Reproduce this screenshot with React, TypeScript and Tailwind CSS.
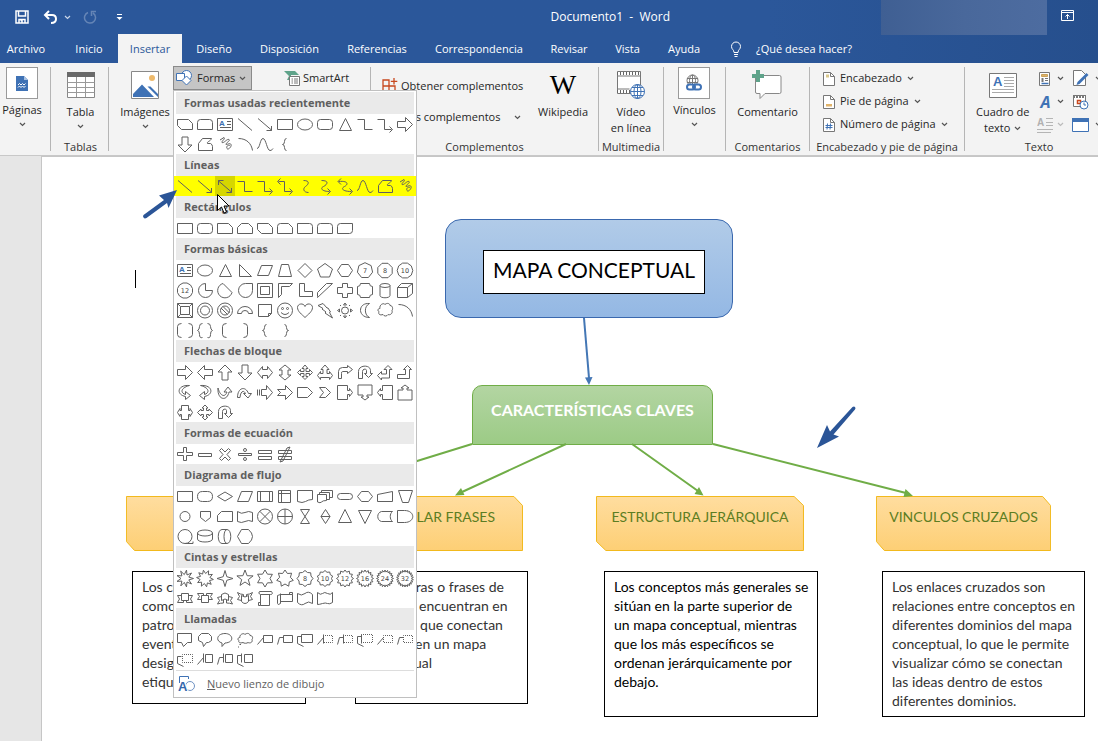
import type { ReactNode } from 'react';

interface ShapeDef {
  d: string;
  label?: string;
  dotted?: string;
  turn?: number;
  flip?: boolean;
  textBox?: boolean;
}

type Shape = string | ShapeDef;

const rect = (x: number, y: number, w: number, h: number) =>
  `M${x} ${y}h${w}v${h}h${-w}z`;

const oval = (cx: number, cy: number, rx: number, ry: number) =>
  `M${cx - rx} ${cy}a${rx} ${ry} 0 1 0 ${rx * 2} 0a${rx} ${ry} 0 1 0 ${-rx * 2} 0z`;

const star = (points: number, outer: number, inner: number, start = -90) =>
  `M${Array.from({ length: points * 2 }, (_, i) => {
    const r = i % 2 ? inner : outer;
    const a = ((start + (i * 180) / points) * Math.PI) / 180;
    return `${(10 + r * Math.cos(a)).toFixed(1)} ${(10.5 + r * Math.sin(a)).toFixed(1)}`;
  }).join('L')}z`;

const polygon = (sides: number, start: number) =>
  `M${Array.from({ length: sides }, (_, i) => {
    const a = ((start + (i * 360) / sides) * Math.PI) / 180;
    return `${(10 + 7.8 * Math.cos(a)).toFixed(1)} ${(10.5 + 7.8 * Math.sin(a)).toFixed(1)}`;
  }).join('L')}z`;

const RECT = rect(2.5, 5.5, 15, 10);
const ROUND = 'M5.5 5.5h9q3 0 3 3v4q0 3-3 3h-9q-3 0-3-3v-4q0-3 3-3z';
const ROUND_TOP = 'M2.5 15.5v-7q0-3 3-3h9q3 0 3 3v7z';
const SNIP_DIAGONAL = 'M2.5 5.5h11l4 4v6h-11l-4-4z';
const TRIANGLE = 'M10.5 4.5l6 12h-12z';
const LINE = 'M3 4.5l14 12';
const LINE_ARROW = 'M3 4.5l14 12M16.5 12v4.5h-5';
const ELBOW = 'M2.5 5.5h7v10h8';
const ELBOW_ARROW = 'M2.5 5.5h7v10h7M14.5 12.5l3 3-3 3';
const FREEFORM = 'M3.5 16.5v-7l4-5h9c-1 3-5 3-4 5h3q2 1 2 3v4z';
const SCRIBBLE =
  'M5 6l4-2.5c2 1-3 4-2 5 2 1 5-4 7-3s-4 4-3 5c2 0 4-2 5 0s-3 6-4 4 1-4 3-3';
const ARC = 'M3.5 4.5c8 0 13 5 14 12';
const CURVE = 'M2 14.5c3 0 3-10 6-10s4 12 7 12c2 0 2-1 3-2';
const BRACE_L = 'M11.5 4.5q-2 0-2 3t-2 3q2 0 2 3t2 3';
const BRACE_R = 'M9.5 4.5q2 0 2 3t2 3q-2 0-2 3t-2 3';
const ARROW = 'M2.5 7.5h8v-4l7 7-7 7v-4h-8z';
const U_TURN = 'M3.5 16.5v-7c0-7 12-7 12-1v3h2l-4 4-4-4h2v-3c0-2-4-2-4 1v7z';
const BENT = 'M3.5 16.5v-7q0-4 4-4h5v-2l5 4-5 4v-2h-5q-1 0-1 2v5z';
const BENT_UP = 'M2.5 12.5h8v-5h-2l4-4 4 4h-2v9h-12z';
const CURVED = 'M14.5 3.5c-12-1-14 9-4 11v3l5-4-5-4v3c-6-2-4-7 4-9z';
const ARROW_BOX = 'M2.5 3.5h10v5h2v-2l3 4-3 4v-2h-2v5h-10z';
const DOUBLE_ARROW = 'M2.5 10.5l5-6v3h5v-3l5 6-5 6v-3h-5v3z';
const TEXT_BOX: ShapeDef = {
  d: rect(2.5, 4.5, 15, 12) + 'M12 7.5h4M12 10.5h4M5 13.5h11',
  textBox: true,
};
const CLOUD =
  'M5 8.5c-1-4 4-6 5-4 2-2 5-1 5 1 3 0 3 4 2 5 1 3-2 5-4 4-1 2-4 2-5 0-3 1-5 0-4-3-2-1-1-3 1-3z';

const SECTIONS: { title: string; shapes: Shape[] }[] = [
  {
    title: 'Formas usadas recientemente',
    shapes: [
      SNIP_DIAGONAL,
      ROUND_TOP,
      TEXT_BOX,
      LINE,
      LINE_ARROW,
      RECT,
      oval(10, 10.5, 7.5, 5.5),
      ROUND,
      TRIANGLE,
      ELBOW,
      ELBOW_ARROW,
      ARROW,
      { d: ARROW, turn: 90 },
      FREEFORM,
      SCRIBBLE,
      ARC,
      CURVE,
      BRACE_L,
    ],
  },
  {
    title: 'Líneas',
    shapes: [
      LINE,
      LINE_ARROW,
      LINE_ARROW + 'M3.5 9v-4.5h5',
      ELBOW,
      ELBOW_ARROW,
      'M3.5 5.5h6v10h7M14.5 12.5l3 3-3 3M5.5 2.5l-3 3 3 3',
      'M8.5 4.5c7 0 5 4 2 6s-2 6 3 6',
      'M6.5 4.5c8 0 6 4 2 6s-1 5 6 5M12.5 12.5l3 3-3 3',
      'M3.5 5.5c10-1 10 3 6 5s-2 5 7 5M14.5 12.5l3 3-3 3M6 2.5l-3 3 3 3',
      CURVE,
      FREEFORM,
      SCRIBBLE,
    ],
  },
  {
    title: 'Rectángulos',
    shapes: [
      RECT,
      ROUND,
      'M2.5 5.5h11l4 4v6h-15z',
      'M6.5 5.5h7l4 4v6h-15v-6z',
      SNIP_DIAGONAL,
      'M5.5 5.5h8l4 4v6h-15v-7q0-3 3-3z',
      'M2.5 5.5h12q3 0 3 3v7h-15z',
      ROUND_TOP,
      'M5.5 5.5h12v7q0 3-3 3h-12v-7q0-3 3-3z',
    ],
  },
  {
    title: 'Formas básicas',
    shapes: [
      TEXT_BOX,
      oval(10, 10.5, 7.5, 5.5),
      TRIANGLE,
      'M4.5 4.5v12h12z',
      'M6.5 5.5h11l-4 10h-11z',
      'M6.5 4.5h7l3 12h-13z',
      'M10 3.5l7 7-7 7-7-7z',
      'M10 3.5l7.5 5.5-3 8h-9l-3-8z',
      'M6.5 4.5h7l4 6-4 6h-7l-4-6z',
      { d: polygon(7, -90), label: '7' },
      { d: polygon(8, 22.5), label: '8' },
      { d: polygon(10, 0), label: '10' },
      { d: polygon(12, 15), label: '12' },
      'M10.5 3.5a7 7 0 1 0 7 7h-7z',
      'M8 3.5a7.3 7.3 0 1 0 9 9z',
      'M17.5 3.5h-7a7 7 0 1 0 7 7z',
      rect(2.5, 3.5, 15, 14) + rect(5.5, 6.5, 9, 8),
      'M3.5 3.5h14l-3 3h-8v8l-3 3z',
      'M4.5 3.5h5v8h8v5h-13z',
      'M2.5 16.5v-4l9-9h6l-15 14z',
      'M7.5 3.5h5v4h5v6h-5v4h-5v-4h-5v-6h5z',
      'M5.5 3.5h9q0 3 3 3v8q-3 0-3 3h-9q0-3-3-3v-8q3 0 3-3z',
      oval(10, 5.5, 5, 2) + 'M5 5.5v10c0 3 10 3 10 0v-10',
      'M2.5 7.5h10v10h-10zM2.5 7.5l4-4h11l-5 4M17.5 3.5v10l-5 4',
      rect(2.5, 3.5, 15, 14) + rect(5.5, 6.5, 9, 8) + 'M2.5 3.5l3 3M17.5 3.5l-3 3M2.5 17.5l3-3M17.5 17.5l-3-3',
      oval(10, 10.5, 7.5, 7.5) + oval(10, 10.5, 4.5, 4.5),
      oval(10, 10.5, 7.5, 7.5) + oval(10, 10.5, 4.5, 4.5) + 'M6 8l6.5 6.5M8 6.5l6.5 6.5',
      'M2.5 13.5a7.5 7 0 0 1 15 0h-4a3.5 3 0 0 0-7 0z',
      'M3.5 4.5h13v9l-3 3h-10zM13.5 16.5v-3h3',
      oval(10, 10.5, 7.5, 7.5) + oval(7.5, 8.5, 1, 1) + oval(12.5, 8.5, 1, 1) + 'M6 12.5q4 4 8 0',
      'M10 17.5c-3-3-7.500-6-7.500-10s6-5 7.500-1c1.500-4 7.500-3 7.500 1s-4.500 7-7.500 10z',
      'M3 5.5l5-2 4 4.5h1l2.5 4-1 .5 3 5.500-7.500-5 1-1-4-3 1-.5z',
      oval(10, 10.5, 3.5, 3.5) +
        'M8.5 5l1.5-2 1.5 2zM8.5 16l1.5 2 1.5-2zM4.5 9l-2 1.5 2 1.5zM15.5 9l2 1.5-2 1.5zM5 5.5h1M14 5.5h1M5 15.5h1M14 15.5h1',
      'M14.5 3.5c-12-1-12 14 0 14-5-2-6-11 0-14z',
      CLOUD,
      ARC,
      'M6.5 3.5q-4 0-4 3v8q0 3 4 3M13.5 3.5q4 0 4 3v8q0 3-4 3',
      'M7.5 3.5q-3 0-3 3t-2 4q2 0 2 4t3 3M12.5 3.5q3 0 3 3t2 4q-2 0-2 4t-3 3',
      'M11.5 3.5q-4 0-4 3v8q0 3 4 3',
      'M8.5 3.5q4 0 4 3v8q0 3-4 3',
      BRACE_L,
      BRACE_R,
    ],
  },
  {
    title: 'Flechas de bloque',
    shapes: [
      ARROW,
      { d: ARROW, turn: 180 },
      { d: ARROW, turn: -90 },
      { d: ARROW, turn: 90 },
      DOUBLE_ARROW,
      { d: DOUBLE_ARROW, turn: 90 },
      'M10 3l3 3.5h-2v3h3.5v-2l3 3-3 3v-2h-3.5v3h2l-3 3-3-3h2v-3h-3.5v2l-3-3 3-3v2h3.5v-3h-2z',
      'M10 3l4 4.5h-2v4h2.5v-2l3 4-3 4v-2h-9v2l-3-4 3-4v2h2.5v-4h-2z',
      BENT,
      U_TURN,
      'M2.5 13.5l4-4v2.5h5v-4.5h-2.5l4-4 4 4h-2.5v8.5h-8v2z',
      BENT_UP,
      CURVED,
      { d: CURVED, flip: true },
      { d: CURVED, turn: -90 },
      'M2.5 15.5c0-10 8-12 11-4h3l-3.500 4.500-4.500-4.500h2c-2-4-5-2-5.500 4z',
      'M2.5 7.5v6M4.5 7.5v6M6.5 7.5h5v-4l6 7-6 7v-4h-5z',
      'M2.5 7.5h8v-4l7 7-7 7v-4h-8l3-3z',
      'M2.5 5.5h10l5 5-5 5h-10z',
      'M4.5 5.5h6l5 5-5 5h-6l4-5z',
      ARROW_BOX,
      { d: ARROW_BOX, turn: 90 },
      { d: ARROW_BOX, turn: 180 },
      { d: ARROW_BOX, turn: -90 },
      'M6.5 3.5h7v5h1.5v-2l2.5 4-2.5 4v-2h-1.5v5h-7v-5h-1.5v2l-2.5-4 2.5-4v2h1.5z',
      'M10 3l3 3h-1.5v2.5h2.5v-1.5l3.5 3.5-3.5 3.5v-1.5h-2.5v2.5h1.5l-3 3-3-3h1.5v-2.5h-2.5v1.5l-3.500-3.500 3.500-3.500v1.500h2.500v-2.500h-1.500z',
      U_TURN,
    ],
  },
  {
    title: 'Formas de ecuación',
    shapes: [
      'M8.5 3.5h3v5h6v3h-6v5h-3v-5h-6v-3h6z',
      'M3.5 9.5h13v3h-13z',
      'M6.5 4.5l3.5 3.5 3.5-3.5 2 2-3.5 4 3.5 4-2 2-3.5-3.5-3.5 3.5-2-2 3.5-4-3.5-4z',
      'M3.5 9.5h13v2h-13z' + oval(10, 6, 1.5, 1.5) + oval(10, 15, 1.5, 1.5),
      'M3.5 6.5h13v3h-13zM3.5 12.5h13v3h-13z',
      'M3.5 6.5h13v3h-13zM3.5 12.5h13v3h-13zM12 4l3-1-7 14-3 1z',
    ],
  },
  {
    title: 'Diagrama de flujo',
    shapes: [
      RECT,
      'M7.5 5.5h5q5 0 5 5t-5 5h-5q-5 0-5-5t5-5z',
      'M10 6l7.5 4.5-7.5 4.5-7.5-4.5z',
      'M6.5 5.5h11l-4 10h-11z',
      rect(2.5, 5.5, 15, 10) + 'M5.5 5.5v10M14.5 5.5v10',
      rect(3.5, 4.5, 12, 12) + 'M6.5 4.5v12M3.5 7.5h12',
      'M2.5 4.5h15v9q-4 0-7 2t-8 0z',
      'M2.5 8.5h9v6q-4 0-5 1.5t-4 0zM4.5 8.5v-2h10v7h-3M6.5 6.5v-2h11v7h-3',
      'M5.5 7.5h9q3 0 3 3t-3 3h-9q-3 0-3-3t3-3z',
      'M6.5 5.5h7l4 5-4 5h-7l-4-5z',
      'M2.5 8.5l15-3v10h-15z',
      'M3.5 4.5h14l-4 12h-6z',
      oval(10, 10.5, 5, 5),
      'M5.5 5.5h10v6l-5 4-5-4z',
      'M6.5 5.5h11v10h-15v-6z',
      'M2.5 5.5q4 3 7.5 1t7.5 0v9q-4-2-7.5 0t-7.5 0z',
      oval(10, 10.5, 7.5, 7.5) + 'M4.7 5.2l10.6 10.6M15.3 5.2l-10.6 10.6',
      oval(10, 10.5, 7.5, 7.5) + 'M10 3v15M2.5 10.5h15',
      'M5.5 3.5h9l-9 14h9z',
      'M10.5 3.5l4.5 7-4.5 7-4.5-7zM6 10.5h9',
      'M10 3.5l6.5 13h-13z',
      'M3.5 4.5h13l-6.5 13z',
      'M6.5 5.5h11c-3 2-3 8 0 10h-11c-5-1-5-9 0-10z',
      'M2.5 4.5h7c11 0 11 12 0 12h-7z',
      oval(10, 10.5, 7, 7) + 'M10 17.5h8v-2',
      oval(10, 7, 7.5, 3) + 'M2.5 7v6c0 4 15 4 15 0v-6',
      'M7 3.5h5c5 0 5 14 0 14h-5c-5 0-5-14 0-14zM12 3.5c-4 0-4 14 0 14',
      'M6.5 3.5h7q8 7 0 14h-7l-4-7z',
    ],
  },
  {
    title: 'Cintas y estrellas',
    shapes: [
      star(9, 8.5, 4, -80),
      star(10, 8.5, 5, -65),
      star(4, 8, 2.5),
      star(5, 8.5, 3.5),
      star(6, 8.5, 5),
      star(7, 8.5, 5.5),
      { d: star(8, 8, 6.5), label: '8' },
      { d: star(10, 8, 6.5), label: '10' },
      { d: star(12, 8.5, 6.5), label: '12' },
      { d: star(16, 8.5, 6.5), label: '16' },
      { d: star(20, 8.5, 6.5), label: '24' },
      { d: star(22, 8.5, 6.5), label: '32' },
      'M6.5 5.5h7v7h-7zM6.5 7.5h-4l2 3.5-2 3.5h6v-2M13.5 7.5h4l-2 3.5 2 3.5h-6v-2',
      'M6.5 7.5h7v7h-7zM6.5 11.5h-4l2-3-2-3h6v2M13.5 11.5h4l-2-3 2-3h-6v2',
      'M6.5 12.5v-6q3.5-3 7 0v6q-3.5-3-7 0zM6.5 8.5l-4 1 2 3-2 3.5q3-1 6-1v-3M13.5 8.5l4 1-2 3 2 3.5q-3-1-6-1v-3',
      'M6.5 7.5v6q3.5 4 7 0v-6q-3.5 3-7 0zM6.5 12.5l-4-1 2-3-2-4q3 2 6 2v2M13.5 12.5l4-1-2-3 2-4q-3 2-6 2v2',
      'M5.5 6.5v11h9v-11M5.5 17.5h-2v-3h2M4.5 3.5h12q2 3-1 3h-10q-3-1-1-3z',
      'M5.5 6.5h12v7h-12M5.5 5.5v10q-3 2-3 0v-8l3-1M14.5 6.5v-2h3v2',
      'M2.5 5.5q4 3 7.5 0t7.5 1v9q-4-3-7.5 0t-7.5-1z',
      'M2.5 4.5q3 3 5 1t5 0 5-1v10q-3 2-5 1t-5 0-5 1z',
    ],
  },
  {
    title: 'Llamadas',
    shapes: [
      'M2.5 3.5h14v9h-4l-4 4-2-4h-4z',
      'M6.5 3.5h7l3 3v4l-3 2h-2l-3 4-1-4-4-2v-4z',
      'M7 16.5v-3.500c-7-2-5-9.500 3-9.500s10 9 0 9.500z',
      'M5 7.5c-1-3 4-5 5-3 2-2 5-1 5 1 3 0 3 3 2 4 1 3-2 4-4 3-1 1-4 1-5 0-3 1-5 0-4-2-2-1-1-3 1-3zM4.500 14.500h1.500M3 17h1',
      'M8.5 5.5h9v7h-9zM2.5 14.5l6-7',
      'M8.5 5.5h9v7h-9zM2.5 14.5l2-7h4',
      'M6.5 4.5h11v8h-11zM6.5 6.5h-4v7l6 3',
      { d: 'M2.5 14.5l6-7M8.5 4.5v9', dotted: rect(8.5, 5.5, 9, 7) },
      { d: 'M2.5 14.5l2-7h4M8.5 4.5v9', dotted: rect(8.5, 5.5, 9, 7) },
      { d: 'M6.5 4.5v9M6.5 6.5h-4v7l6 3', dotted: rect(6.5, 4.5, 11, 8) },
      { d: 'M2.5 14.5l6-7', dotted: rect(8.5, 5.5, 9, 7) },
      { d: 'M2.5 14.5l2-7h4', dotted: rect(8.5, 5.5, 9, 7) },
      { d: 'M6.5 6.5h-4v7l6 3', dotted: rect(7.5, 4.5, 10, 8) },
      'M10.5 4.5h7v8h-7zM2.5 14.5l6-7M8.5 3.5v9',
      'M10.5 4.5h7v8h-7zM2.5 14.5l2-7h4M8.5 3.5v9',
      'M9.5 4.5h8v8h-8zM6.5 3.5v9M6.5 5.5h-4v8l6 3',
    ],
  },
];

const ShapeIcon = ({ shape }: { shape: Shape }) => {
  const def: ShapeDef = typeof shape === 'string' ? { d: shape } : shape;
  const transform = def.flip
    ? 'matrix(-1 0 0 1 20 0)'
    : def.turn
      ? `rotate(${def.turn} 10 10.5)`
      : undefined;

  return (
    <svg viewBox="0 0 20 20" className="h-5 w-5" fill="none" stroke="#606060">
      <path d={def.d} transform={transform} />
      {def.dotted && <path d={def.dotted} strokeDasharray="1 1" strokeDashoffset="0.5" />}
      {def.label && (
        <text
          x="10"
          y="13"
          textAnchor="middle"
          fontSize="6.5"
          fontFamily="DejaVu Sans, sans-serif"
          fill="#444"
          stroke="none"
        >
          {def.label}
        </text>
      )}
      {def.textBox && (
        <text
          x="4"
          y="12"
          fontSize="8"
          fontWeight="bold"
          fontFamily="Liberation Sans, sans-serif"
          fill="#3a6fb0"
          stroke="none"
        >
          A
        </text>
      )}
    </svg>
  );
};

const Chevron = ({ className = 'text-[#555]' }: { className?: string }) => (
  <svg viewBox="0 0 7 5" className={`h-[5px] w-[7px] shrink-0 ${className}`} fill="none" stroke="currentColor">
    <path d="M1 1l2.5 2.5L6 1" strokeWidth="1.2" />
  </svg>
);

const ShapesMenu = () => (
  <div className="absolute top-full left-0 z-20 w-[244px] border border-[#c0c0c0] bg-white pt-px text-[11px] text-[#5f5f5f]">
    {SECTIONS.map(({ title, shapes }) => (
      <section key={title}>
        <h3 className="mx-0.5 flex h-[22px] items-center bg-[#eaeaea] pl-2 font-bold">{title}</h3>
        <div className={`grid grid-cols-12 px-px ${title === 'Líneas' ? 'bg-[#ffff00]' : ''}`}>
          {shapes.map((shape, i) => (
            <button
              key={i}
              type="button"
              aria-label={`${title} ${i + 1}`}
              className={`h-5 w-5 ${title === 'Líneas' && i === 2 ? 'bg-[#d6d600]' : ''}`}
            >
              <ShapeIcon shape={shape} />
            </button>
          ))}
        </div>
      </section>
    ))}
    <button
      type="button"
      className="mx-0.5 flex h-[27px] w-[238px] items-center gap-[11px] border-t border-[#ddd] pl-0.5"
    >
      <svg viewBox="0 0 18 18" className="h-[18px] w-[18px]" fill="none" stroke="#3f72b5">
        <path d="M1.5 8V1.5h9V4" />
        <circle cx="12" cy="11" r="4.5" stroke="#6f93c4" />
        <text x="0" y="16" fontSize="13" fontWeight="bold" fontFamily="Liberation Sans, sans-serif" fill="#3568ad" stroke="white" strokeWidth="2" paintOrder="stroke">
          A
        </text>
      </svg>
      <span>
        <u>N</u>uevo lienzo de dibujo
      </span>
    </button>
  </div>
);

const TABS = [
  { name: 'Archivo', width: 'w-[60px] pr-2' },
  { name: 'Inicio', width: 'w-[58px]' },
  { name: 'Insertar', width: 'w-16' },
  { name: 'Diseño', width: 'w-16' },
  { name: 'Disposición', width: 'w-[87px]' },
  { name: 'Referencias', width: 'w-[88px]' },
  { name: 'Correspondencia', width: 'w-[116px]' },
  { name: 'Revisar', width: 'w-16' },
  { name: 'Vista', width: 'w-[53px]' },
  { name: 'Ayuda', width: 'w-[60px]' },
];

const Header = () => (
  <header className="relative h-[63px] overflow-hidden bg-gradient-to-r from-[#2b579a] from-70% to-[#264f8d] text-[11px] text-white">
    <div className="flex h-[34px] items-center pr-6 pl-[15px]">
      <div className="flex flex-1 items-center">
        <button type="button" aria-label="Guardar">
          <svg viewBox="0 0 14 14" className="h-3.5 w-3.5" fill="none" stroke="white" strokeWidth="1.5">
            <path d="M1 1h12v12H1z" />
            <path d="M3.5 1v5h7V1M4 13V9.5h6V13" />
            <path d="M5.5 10.5h1.5v2.5" />
          </svg>
        </button>
        <button type="button" aria-label="Deshacer" className="ml-[14px]">
          <svg viewBox="0 0 15 14" className="h-3.5 w-[15px]" fill="none" stroke="white" strokeWidth="2">
            <path d="M6 1L2 5l4 4M2 5h7q4 0 4 4t-5 4" />
          </svg>
        </button>
        <Chevron className="ml-1.5 text-[#c9d5e8]" />
        <button type="button" aria-label="Rehacer" className="ml-3">
          <svg viewBox="0 0 14 14" className="h-3.5 w-3.5" fill="none" stroke="#6585b6" strokeWidth="1.5">
            <path d="M5 2.5a5.5 5.5 0 1 0 5 .5M8.5 6V1.5H13" />
          </svg>
        </button>
        <button type="button" aria-label="Personalizar barra" className="ml-[19px]">
          <svg viewBox="0 0 7 7" className="h-[7px] w-[7px]" fill="white">
            <path d="M1 0h5v1H1zM.5 3h6L3.5 6z" />
          </svg>
        </button>
      </div>
      <h1 className="text-xs whitespace-pre">Documento1  -  Word</h1>
      <div className="flex w-[404px] items-center justify-end">
        <button type="button" aria-label="Opciones de presentación de la cinta" className="-mt-1">
          <svg viewBox="0 0 13 11" className="h-[11px] w-[13px]" fill="none" stroke="white">
            <path d="M.5.5h12v10H.5zM.5 2.5h12M6.5 9V4.5M4.5 6.5l2-2 2 2" />
          </svg>
        </button>
      </div>
    </div>
    <div className="absolute top-0 right-[51px] h-[35px] w-[166px] bg-gradient-to-r from-[#3f5f93] via-[#49689b] to-[#4d6ca0]" />
    <nav className="flex h-[30px] items-center">
      {TABS.map(({ name, width }) => (
        <button
          key={name}
          type="button"
          className={`h-full shrink-0 whitespace-nowrap ${width} ${
            name === 'Insertar' ? 'bg-[#f3f3f3] text-[#2b579a]' : ''
          }`}
        >
          {name}
        </button>
      ))}
      <button type="button" className="ml-4 flex items-center gap-[14px] whitespace-nowrap">
        <svg viewBox="0 0 12 16" className="h-4 w-3" fill="none" stroke="white">
          <path d="M4 11.5c0-3-2.5-3-2.5-6a4.5 4.5 0 0 1 9 0c0 3-2.5 3-2.5 6zM4 13.5h4M4.5 15.5h3" />
        </svg>
        ¿Qué desea hacer?
      </button>
    </nav>
  </header>
);

interface GroupProps {
  width: string;
  label?: string;
  children: ReactNode;
}

const Group = ({ width, label, children }: GroupProps) => (
  <div className={`flex shrink-0 flex-col border-r border-[#b5b5b5] whitespace-nowrap ${width}`}>
    <div className="flex flex-1 justify-center">{children}</div>
    {label && <div className="h-[9px] text-center leading-[9px] text-[#333]">{label}</div>}
  </div>
);

interface BigButtonProps {
  icon: ReactNode;
  label: ReactNode;
  boxed?: boolean;
  chevron?: boolean;
}

const BigButton = ({ icon, label, boxed, chevron }: BigButtonProps) => (
  <button type="button" className="flex flex-col items-center self-start leading-4">
    <span
      className={`flex h-8 items-center justify-center ${
        boxed ? 'w-8 border border-[#9a9a9a] bg-white' : 'mt-0.5'
      }`}
    >
      {icon}
    </span>
    <span className="mt-[3px]">{label}</span>
    {chevron && (
      <span className="mt-1">
        <Chevron />
      </span>
    )}
  </button>
);

const PageIcon = ({ children }: { children: ReactNode }) => (
  <svg viewBox="0 0 12 14" className="h-3.5 w-3" fill="none">
    <path d="M.5.5h7l4 4v9H.5z" fill="white" stroke="#777" />
    <path d="M7.5.5v4h4" stroke="#777" />
    {children}
  </svg>
);

const HEADER_ITEMS = [
  { name: 'Encabezado', mark: <path d="M3 2.5h3v3H3z" fill="#d9c88c" /> },
  { name: 'Pie de página', mark: <path d="M3 9h6v2.5H3z" fill="#e0b36a" /> },
  {
    name: 'Número de página',
    mark: <path d="M4.5 5.5l-.5 6M7.5 5.5l-.5 6M2.5 7.5h7M2.5 9.5h7" stroke="#3f72b5" />,
  },
];

const Ribbon = () => (
  <div className="relative z-10 flex h-[93px] border-b border-[#c8c8c8] bg-[#f3f3f3] py-1 text-[11px] text-[#262626]">
    <Group width="w-[51px] pr-1.5">
      <BigButton
        boxed
        chevron
        label="Páginas"
        icon={
          <svg viewBox="0 0 12 15" className="h-[15px] w-3">
            <path d="M0 0h8l4 4v11H0z" fill="#3f72b5" />
            <path d="M8 0v4h4" fill="#a9c2e2" />
            <path d="M2 9l1.500-1.500L5 9l1.500-1.500L8 9l1.500-1.500M2 11.500l1.500-1.500L5 11.500 6.500 10 8 11.500 9.500 10" fill="none" stroke="white" />
          </svg>
        }
      />
    </Group>
    <Group width="w-[58px] pl-0.5" label="Tablas">
      <BigButton
        chevron
        label="Tabla"
        icon={
          <svg viewBox="0 0 28 26" className="h-[26px] w-7" fill="none">
            <path d="M.5.5h27v25H.5z" fill="white" stroke="#888" />
            <path d="M0 0h28v5H0z" fill="#6a6a6a" />
            <path d="M.5 10.5h27M.5 15.5h27M.5 20.5h27M9.5 5v20M18.5 5v20" stroke="#999" />
          </svg>
        }
      />
    </Group>
    <div className="flex w-[262px] shrink-0 border-r border-[#b5b5b5]">
      <div className="flex w-16 justify-center pl-2">
        <BigButton
          chevron
          label="Imágenes"
          icon={
            <svg viewBox="0 0 28 28" className="h-7 w-7">
              <path d="M.5.5h27v27H.5z" fill="white" stroke="#888" />
              <circle cx="21" cy="7" r="3" fill="#edb96b" />
              <path d="M2 26V23l9-9.500L23 26zM16.500 15.500h3L27 23v3z" fill="#3f72b5" />
            </svg>
          }
        />
      </div>
      <div className="relative -mt-px self-start">
        <button
          type="button"
          aria-expanded="true"
          className="flex h-[24px] w-[79px] items-center gap-1 border border-[#8a8a8a] bg-[#c5c5c5] pl-0.5"
        >
          <svg viewBox="0 0 17 16" className="h-4 w-[17px]" fill="white" stroke="#3f72b5">
            <circle cx="10.5" cy="5.5" r="5" />
            <path d="M.5 3.5h8v7h-8z" />
            <path d="M10.5 6l4.5 4.5-4.5 4.5L6 10.5z" />
          </svg>
          <span>Formas</span>
          <Chevron />
        </button>
        <ShapesMenu />
      </div>
      <button type="button" className="ml-8 flex h-[22px] items-center gap-0.5 self-start">
        <svg viewBox="0 0 17 17" className="h-[17px] w-[17px]">
          <path d="M0 1h11l4 4H7v5H3l2-4z" fill="#5fa38a" />
          <path d="M5.5 6.5h10v9h-10z" fill="white" stroke="#777" />
          <path d="M7.5 9h1.5M10 9h4M7.5 11h1.5M10 11h4M7.5 13h1.5M10 13h4" stroke="#777" />
        </svg>
        SmartArt
      </button>
    </div>
    <Group width="w-[228px]" label="Complementos">
      <div className="flex flex-1 flex-col pt-[10px] pl-[11px]">
        <button type="button" className="flex h-[18px] items-center gap-[3px]">
          <svg viewBox="0 0 16 16" className="h-4 w-4" fill="none" stroke="#c8481e" strokeWidth="1.3">
            <path d="M1 2h6v6H1zM1 8h6v6H1zM7 8h6v6H7zM12 0v6.5M8.8 3.3h6.5" />
          </svg>
          Obtener complementos
        </button>
        <button type="button" className="mt-[13px] flex h-[18px] items-center gap-[14px] pl-[21px]">
          Mis complementos
          <Chevron />
        </button>
      </div>
      <div className="pr-[10px]">
        <BigButton
          label="Wikipedia"
          icon={<span className="font-[Liberation_Serif,serif] text-[28px] text-black">W</span>}
        />
      </div>
    </Group>
    <Group width="w-[65px]" label="Multimedia">
      <BigButton
        label={
          <>
            Vídeo
            <br />
            en línea
          </>
        }
        icon={
          <svg viewBox="0 0 28 28" className="h-7 w-7" fill="none">
            <path d="M.5.5h23v22H.5z" fill="white" stroke="#777" />
            <path d="M0 2.5h24M0 20.5h14" stroke="#666" strokeWidth="3" strokeDasharray="1 2" />
            <path d="M.5 5h23M.5 18h12" stroke="#777" />
            <circle cx="20.5" cy="20.5" r="7" fill="white" stroke="#3f72b5" />
            <path d="M13.5 20.5h14M20.5 13.5v14M15 16.5h11M15 24.5h11" stroke="#3f72b5" />
            <ellipse cx="20.5" cy="20.5" rx="3.5" ry="7" stroke="#3f72b5" />
          </svg>
        }
      />
    </Group>
    <Group width="w-[62px]">
      <BigButton
        boxed
        chevron
        label="Vínculos"
        icon={
          <svg viewBox="0 0 16 18" className="h-[18px] w-4" fill="none">
            <circle cx="6.5" cy="6.5" r="5.5" stroke="#777" />
            <path d="M1 4.5h11M1 8.5h11M6.5 1v10" stroke="#777" />
            <ellipse cx="6.5" cy="6.5" rx="3" ry="5.5" stroke="#777" />
            <rect x="1" y="10.5" width="8" height="5" rx="2.5" fill="white" stroke="#3f72b5" strokeWidth="2" />
            <rect x="7" y="10.5" width="8" height="5" rx="2.5" stroke="#3f72b5" strokeWidth="2" />
          </svg>
        }
      />
    </Group>
    <Group width="w-[84px]" label="Comentarios">
      <BigButton
        label="Comentario"
        icon={
          <svg viewBox="0 0 30 30" className="h-[30px] w-[30px]">
            <path d="M4.5 5.5q-1 0-1 1.5v15q0 1.5 1.5 1.5h3v5l5-5h14.5q1.5 0 1.5-1.5V7q0-1.5-1.5-1.5z" fill="white" stroke="#888" />
            <path d="M4 0h4v4h4v4H8v4H4V8H0V4h4z" fill="#5fa38a" />
          </svg>
        }
      />
    </Group>
    <Group width="w-[155px]" label="Encabezado y pie de página">
      <div className="flex flex-1 flex-col pl-[13px]">
        {HEADER_ITEMS.map(({ name, mark }) => (
          <button key={name} type="button" className="flex h-[23px] items-center gap-[5px]">
            <PageIcon>{mark}</PageIcon>
            <span>{name}</span>
            <Chevron />
          </button>
        ))}
      </div>
    </Group>
    <Group width="w-[149px]" label="Texto">
      <div className="flex flex-1 pl-[11px]">
        <BigButton
          label={
            <>
              Cuadro de
              <br />
              <span className="inline-flex items-center gap-1">
                texto <Chevron />
              </span>
            </>
          }
          icon={
            <svg viewBox="0 0 28 25" className="h-[25px] w-7">
              <path d="M.5.5h27v24H.5z" fill="white" stroke="#777" />
              <text x="4" y="13" fontSize="13" fontWeight="bold" fontFamily="Liberation Sans, sans-serif" fill="#3f72b5">
                A
              </text>
              <path d="M15 4.5h10M15 7.5h10M15 10.5h10M15 13.5h10M3 16.5h22M3 19.5h22" stroke="#aaa" />
            </svg>
          }
        />
        <div className="ml-2 flex flex-col">
          <button type="button" aria-label="Elementos rápidos" className="flex h-[23px] items-center gap-1">
            <svg viewBox="0 0 16 14" className="h-3.5 w-4" fill="none">
              <path d="M2.5.5h10v13h-10z" fill="white" stroke="#777" />
              <path d="M4.5 2.5h6v2h-6z" fill="#e0b36a" stroke="#c9a25a" />
              <path d="M4.5 6v4h2V6z" fill="#777" />
              <path d="M8 6.5h3M8 8.5h3" stroke="#777" />
              <path d="M4.5 11.5h7" stroke="#3f72b5" strokeWidth="1.5" />
            </svg>
            <Chevron />
          </button>
          <button type="button" aria-label="WordArt" className="flex h-[23px] items-center gap-1">
            <span className="w-4 text-center text-base font-bold text-[#3f72b5] italic">A</span>
            <Chevron />
          </button>
          <button type="button" aria-label="Letra capital" className="flex h-[23px] items-center gap-1">
            <svg viewBox="0 0 16 16" className="h-4 w-4">
              <text x="0" y="9" fontSize="10" fontWeight="bold" fontFamily="Liberation Sans, sans-serif" fill="#b0b0b0">
                A
              </text>
              <path d="M9 1.5h7M9 5.5h7M9 8.5h7M0 12.5h16M0 15.5h14" stroke="#b5b5b5" />
            </svg>
            <Chevron className="text-[#bbb]" />
          </button>
        </div>
        <div className="ml-2 flex flex-col">
          <button type="button" aria-label="Línea de firma" className="flex h-[23px] items-center gap-1.5">
            <svg viewBox="0 0 17 17" className="h-[17px] w-[17px]">
              <path d="M1.5.5h8l4 4v11h-12z" fill="white" stroke="#777" />
              <path d="M14.5 3l2 2-9 9-3 1 1-3z" fill="#3f72b5" />
            </svg>
            <Chevron />
          </button>
          <button type="button" aria-label="Fecha y hora" className="flex h-[23px] items-center">
            <svg viewBox="0 0 17 16" className="h-4 w-[17px]" fill="none">
              <path d="M1.5 1.5h12v11h-12z" fill="white" stroke="#777" />
              <path d="M1 2.5h13" stroke="#777" strokeWidth="3" strokeDasharray="2 1" />
              <path d="M5.5 6.5h3v3h-3z" stroke="#c8481e" strokeWidth="1.5" />
              <circle cx="12" cy="11" r="4" fill="white" stroke="#3f72b5" />
              <path d="M12 8.5V11h2" stroke="#3f72b5" />
            </svg>
          </button>
          <button type="button" aria-label="Objeto" className="flex h-[23px] items-center gap-1.5">
            <svg viewBox="0 0 17 14" className="h-3.5 w-[17px]">
              <path d="M.5.5h16v13H.5z" fill="white" stroke="#3f72b5" />
              <path d="M0 0h17v4H0z" fill="#3f72b5" />
            </svg>
            <Chevron />
          </button>
        </div>
      </div>
    </Group>
  </div>
);

interface SnipNodeProps {
  place: string;
  children?: ReactNode;
}

const SnipNode = ({ place, children }: SnipNodeProps) => (
  <div className={`absolute top-[339px] h-[55px] ${place}`}>
    <svg viewBox="0 0 200 55" preserveAspectRatio="none" className="absolute inset-0 h-full w-full">
      <defs>
        <linearGradient id="amber" x1="0" y1="0" x2="0" y2="1">
          <stop offset="0" stopColor="#ffdd9f" />
          <stop offset="1" stopColor="#fdcf75" />
        </linearGradient>
      </defs>
      <path
        d="M.5.5H190.5L199.5 9.5V54.5H9.5L.5 45.5z"
        fill="url(#amber)"
        stroke="#f2b91d"
        vectorEffect="non-scaling-stroke"
      />
    </svg>
    <p className="relative pt-[11px] text-sm leading-5 text-[#5c7d22]">{children}</p>
  </div>
);

interface NoteProps {
  place: string;
  lines: string[];
}

const Note = ({ place, lines }: NoteProps) => (
  <div className={`absolute top-[414px] border border-black bg-white pt-[5px] pl-[9px] text-sm leading-[19px] ${place}`}>
    {lines.map((line) => (
      <p key={line} className="whitespace-nowrap">
        {line}
      </p>
    ))}
  </div>
);

const Diagram = () => (
  <div className="relative min-h-[584px] flex-1 overflow-hidden border-t border-l border-[#c6c6c6] bg-white font-[Lato,Carlito,sans-serif]">
    <div className="absolute top-[113px] left-[93px] h-[18px] w-px bg-black" />
    <div className="absolute top-[62px] left-[403px] h-[99px] w-[288px] rounded-2xl border border-[#3a68ae] bg-gradient-to-b from-[#b1cbe8] to-[#94b8e4]" />
    <h2 className="absolute top-[93px] left-[441px] flex h-[44px] w-[222px] items-center justify-center border border-black bg-white pb-1 text-[21px] text-black">
      MAPA CONCEPTUAL
    </h2>
    <h2 className="absolute top-[228px] left-[430px] h-[60px] w-[241px] rounded-t-[10px] border border-[#70ad47] bg-gradient-to-b from-[#b3d5a2] to-[#9ccb86] pt-3.5 text-center text-base leading-5 font-bold text-white">
      CARACTERÍSTICAS CLAVES
    </h2>
    <SnipNode place="left-[84px] w-[180px]" />
    <SnipNode place="left-[290px] w-[191px] pr-7 text-right">VINCULAR FRASES</SnipNode>
    <SnipNode place="left-[554px] w-[208px] text-center">ESTRUCTURA JERÁRQUICA</SnipNode>
    <SnipNode place="left-[834px] w-[175px] text-center">VINCULOS CRUZADOS</SnipNode>
    <Note
      place="left-[90px] h-[133px] w-[174px] text-[#333]"
      lines={['Los conceptos', 'como ideas', 'patrones', 'eventos', 'designa', 'etiqueta']}
    />
    <Note
      place="left-[313px] h-[133px] w-[173px] text-[#333]"
      lines={[
        'La palabras o frases de',
        'y que se encuentran en',
        'las ideas que conectan',
        'el texto en un mapa',
        'conceptual',
      ]}
    />
    <Note
      place="left-[562px] h-[146px] w-[214px] text-black"
      lines={[
        'Los conceptos más generales se',
        'sitúan en la parte superior de',
        'un mapa conceptual, mientras',
        'que los más específicos se',
        'ordenan jerárquicamente por',
        'debajo.',
      ]}
    />
    <Note
      place="left-[840px] h-[146px] w-[203px] text-[#333]"
      lines={[
        'Los enlaces cruzados son',
        'relaciones entre conceptos en',
        'diferentes dominios del mapa',
        'conceptual, lo que le permite',
        'visualizar cómo se conectan',
        'las ideas dentro de estos',
        'diferentes dominios.',
      ]}
    />
    <svg viewBox="0 0 1056 584" className="absolute top-0 left-0 h-[584px] w-[1056px]" fill="none">
      <path d="M542 161L547 221" stroke="#4477b5" strokeWidth="2" />
      <path d="M543 220.5l7.5-.5-3.5 8z" fill="#4477b5" />
      <path d="M430 287L262 339M524 287L420 335M590 287L656 334M671 287L864 336" stroke="#70ad47" strokeWidth="2" />
      <path d="M413 338.5l6-7.5 3.5 7zM661.5 338.5l-9-1.5 4.500-7zM871 339l-9.5 1 2-8z" fill="#70ad47" />
    </svg>
  </div>
);

// Pointer and the two hand-drawn arrows that sit over everything else
const Annotations = () => (
  <>
    <svg viewBox="0 0 38 32" className="pointer-events-none absolute top-[188px] left-[141px] z-30 h-8 w-[38px]">
      <path d="M36 2L18 7.5l5 4.5L2.5 27q-1 1 0 2.5t3 .5L26 15l1.5 5z" fill="#2b5597" />
    </svg>
    <svg viewBox="0 0 42 44" className="pointer-events-none absolute top-[405px] left-[816px] z-30 h-11 w-[42px]">
      <path d="M1 43l10-23 3 6.5L36.5 2q1.5-1 2.5 0t0 2.5L17.5 29.5l5.5 2z" fill="#2b5597" />
    </svg>
    <svg viewBox="0 0 13 20" className="pointer-events-none absolute top-[194px] left-[217px] z-30 h-5 w-[13px]">
      <path d="M.5.5v16l4-3.5 2.5 6 2.5-1-2.5-6h5z" fill="white" stroke="black" />
    </svg>
  </>
);

export default function App() {
  return (
    <div className="relative flex min-h-screen flex-col overflow-x-hidden bg-[#e6e6e6] font-[Open_Sans,Noto_Sans,sans-serif]">
      <Header />
      <Ribbon />
      <main className="flex flex-1 pl-[41px]">
        <Diagram />
      </main>
      <Annotations />
    </div>
  );
}
